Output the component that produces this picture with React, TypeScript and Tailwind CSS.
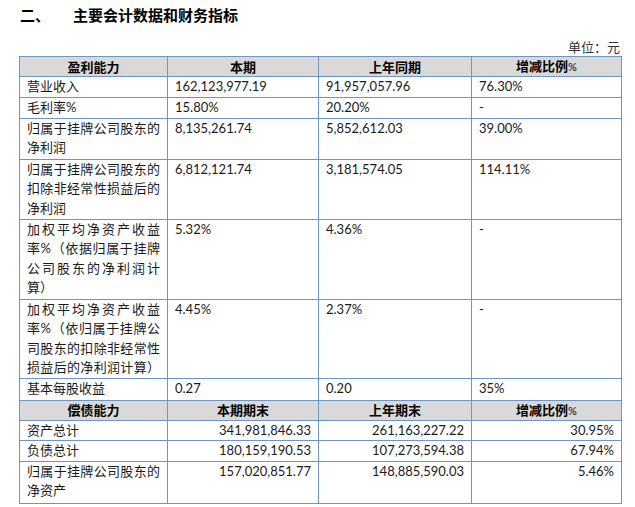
import React from "react";

const FONT = { fontFamily: "Lato, 'Noto Sans CJK SC', sans-serif" };

type Cell = { lines: string[]; right?: boolean };

type Row = { h: string; cells: Cell[] };

const c = (...lines: string[]): Cell => ({ lines });
const r = (text: string): Cell => ({ lines: [text], right: true });

const profitRows: Row[] = [
  { h: "h-[21px]", cells: [c("营业收入"), c("162,123,977.19"), c("91,957,057.96"), c("76.30%")] },
  { h: "h-[20px]", cells: [c("毛利率%"), c("15.80%"), c("20.20%"), c("-")] },
  {
    h: "h-[41px]",
    cells: [c("归属于挂牌公司股东的", "净利润"), c("8,135,261.74"), c("5,852,612.03"), c("39.00%")],
  },
  {
    h: "h-[60px]",
    cells: [
      c("归属于挂牌公司股东的", "扣除非经常性损益后的", "净利润"),
      c("6,812,121.74"),
      c("3,181,574.05"),
      c("114.11%"),
    ],
  },
  {
    h: "h-[80px]",
    cells: [
      c("加权平均净资产收益", "率%（依据归属于挂牌", "公司股东的净利润计", "算）"),
      c("5.32%"),
      c("4.36%"),
      c("-"),
    ],
  },
  {
    h: "h-[79px]",
    cells: [
      c("加权平均净资产收益", "率%（依归属于挂牌公", "司股东的扣除非经常性", "损益后的净利润计算）"),
      c("4.45%"),
      c("2.37%"),
      c("-"),
    ],
  },
  { h: "h-[22px]", cells: [c("基本每股收益"), c("0.27"), c("0.20"), c("35%")] },
];

const debtRows: Row[] = [
  { h: "h-[20px]", cells: [c("资产总计"), r("341,981,846.33"), r("261,163,227.22"), r("30.95%")] },
  { h: "h-[20px]", cells: [c("负债总计"), r("180,159,190.53"), r("107,273,594.38"), r("67.94%")] },
  {
    h: "h-[42px]",
    cells: [c("归属于挂牌公司股东的", "净资产"), r("157,020,851.77"), r("148,885,590.03"), r("5.46%")],
  },
];

function HeaderRow({ labels, h }: { labels: string[]; h: string }) {
  return (
    <tr className={`${h} bg-[#d9d9d9]`}>
      {labels.map((l) => (
        <th
          key={l}
          className="border border-[#6f95c5] p-0 text-center align-middle text-[13px] font-bold leading-[18px] text-black"
        >
          {l.endsWith("%") ? (
            <>
              {l.slice(0, -1)}
              <span className="text-[11px] font-normal">%</span>
            </>
          ) : (
            l
          )}
        </th>
      ))}
    </tr>
  );
}

function BodyRow({ row }: { row: Row }) {
  return (
    <tr className={row.h}>
      {row.cells.map((cell, i) => (
        <td
          key={i}
          className={`border border-[#6f95c5] px-[7px] pt-0 pb-0 align-top text-[13px] leading-[19.5px] text-[#1a1a1a] ${
            cell.right ? "text-right" : "text-left"
          }`}
        >
          {cell.lines.map((line, j) => (
            <div
              key={j}
              className={
                cell.lines.length > 1 && (j < cell.lines.length - 1 || line.length >= 10)
                  ? "[text-align-last:justify]"
                  : ""
              }
            >
              {line}
            </div>
          ))}
        </td>
      ))}
    </tr>
  );
}

export default function App() {
  return (
    <div className="h-[507px] w-[635px] bg-white text-black" style={FONT}>
      <div className="flex items-center pt-[5px] pl-[20px] text-[15px] font-bold leading-[20px]">
        <span className="w-[53px]">二、</span>
        <span>主要会计数据和财务指标</span>
      </div>
      <div className="mt-[13px] pr-[15px] text-right text-[13px] leading-[18px] text-[#333]">单位：元</div>
      <table className="ml-[19px] w-[602px] table-fixed border-collapse">
        <colgroup>
          <col className="w-[148px]" />
          <col className="w-[151px]" />
          <col className="w-[153px]" />
          <col className="w-[150px]" />
        </colgroup>
        <tbody>
          <HeaderRow h="h-[19px]" labels={["盈利能力", "本期", "上年同期", "增减比例%"]} />
          {profitRows.map((row, i) => (
            <BodyRow key={i} row={row} />
          ))}
          <HeaderRow h="h-[20px]" labels={["偿债能力", "本期期末", "上年期末", "增减比例%"]} />
          {debtRows.map((row, i) => (
            <BodyRow key={i} row={row} />
          ))}
        </tbody>
      </table>
    </div>
  );
}
